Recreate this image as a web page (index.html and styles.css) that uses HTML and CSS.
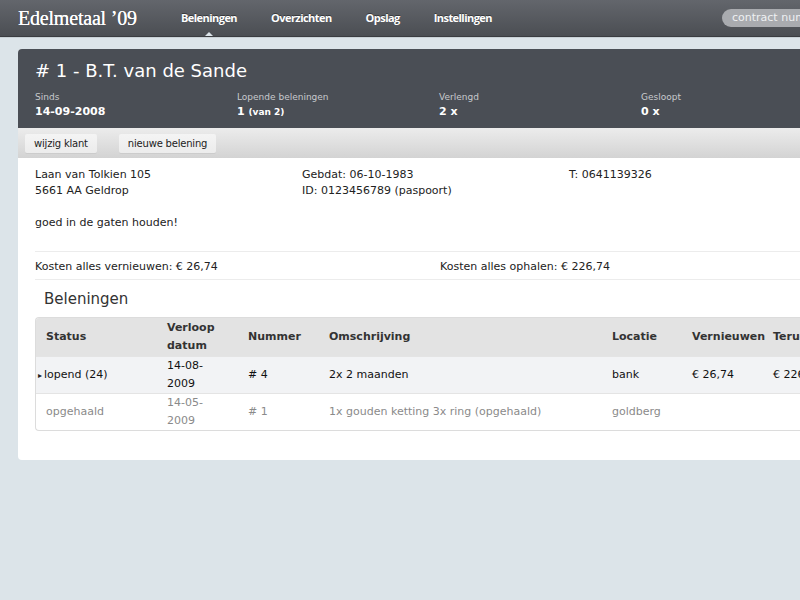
FILE: index.html
```html
<!DOCTYPE html>
<html lang="nl">
<head>
<meta charset="utf-8">
<title>Edelmetaal '09</title>
<link rel="stylesheet" href="styles.css">
</head>
<body>
<header class="topbar">
  <div class="logo">Edelmetaal ’09</div>
  <nav class="mainnav">
    <a class="navitem active">Beleningen</a>
    <a class="navitem">Overzichten</a>
    <a class="navitem">Opslag</a>
    <a class="navitem">Instellingen</a>
  </nav>
  <div class="search"><span>contract nummer</span></div>
</header>

<main class="page">
  <section class="card">
    <div class="card-head">
      <h1 class="title"># 1 - B.T. van de Sande</h1>
      <div class="stats">
        <div class="stat"><div class="stat-label">Sinds</div><div class="stat-value">14-09-2008</div></div>
        <div class="stat"><div class="stat-label">Lopende beleningen</div><div class="stat-value">1 <small>(van 2)</small></div></div>
        <div class="stat"><div class="stat-label">Verlengd</div><div class="stat-value">2 x</div></div>
        <div class="stat"><div class="stat-label">Gesloopt</div><div class="stat-value">0 x</div></div>
      </div>
    </div>
    <div class="toolbar">
      <button class="btn">wijzig klant</button>
      <button class="btn">nieuwe belening</button>
    </div>
    <div class="card-body">
      <div class="info">
        <div>Laan van Tolkien 105<br>5661 AA Geldrop</div>
        <div>Gebdat: 06-10-1983<br>ID: 0123456789 (paspoort)</div>
        <div>T: 0641139326</div>
      </div>
      <p class="note">goed in de gaten houden!</p>
      <div class="costs">
        <div>Kosten alles vernieuwen: € 26,74</div>
        <div>Kosten alles ophalen: € 226,74</div>
      </div>
      <h2 class="section-title">Beleningen</h2>
      <div class="table-wrap">
        <table class="grid">
          <colgroup>
            <col class="c-status"><col class="c-date"><col class="c-num"><col class="c-desc"><col class="c-loc"><col class="c-ren"><col class="c-ret">
          </colgroup>
          <thead>
            <tr><th>Status</th><th class="wrapcell">Verloop datum</th><th>Nummer</th><th>Omschrijving</th><th>Locatie</th><th>Vernieuwen</th><th>Terugbetalen</th></tr>
          </thead>
          <tbody>
            <tr class="row-active"><td><span class="arrow">▸</span>lopend (24)</td><td class="wrapcell">14-08-2009</td><td># 4</td><td>2x 2 maanden</td><td>bank</td><td>€ 26,74</td><td>€ 226,74</td></tr>
            <tr class="row-done"><td>opgehaald</td><td class="wrapcell">14-05-2009</td><td># 1</td><td>1x gouden ketting 3x ring (opgehaald)</td><td>goldberg</td><td></td><td></td></tr>
          </tbody>
        </table>
      </div>
    </div>
  </section>
</main>
</body>
</html>
```

FILE: styles.css
```css
html, body {
  margin: 0;
  padding: 0;
}
body {
  background: #dce4e9;
  font-family: "DejaVu Sans", "Liberation Sans", sans-serif;
  font-size: 11px;
  color: #222;
  overflow: hidden;
  width: 800px;
  height: 600px;
}

.topbar {
  height: 36px;
  background: linear-gradient(#63666c, #4b4e53);
  border-bottom: 1px solid #3a3c40;
  display: flex;
  align-items: center;
  white-space: nowrap;
  box-shadow: 0 1px 0 #c9d1d6;
}
.logo {
  font-family: "Liberation Serif", "DejaVu Serif", serif;
  font-size: 20px;
  color: #fff;
  margin-left: 18px;
  width: 163px;
  letter-spacing: -0.2px;
  text-shadow: 0 0 0.4px #fff;
}
.mainnav {
  display: flex;
  gap: 34px;
  height: 36px;
  align-items: center;
}
.navitem {
  position: relative;
  color: #fff;
  font-family: "Open Sans", "DejaVu Sans", sans-serif;
  font-weight: bold;
  font-size: 11px;
  letter-spacing: -0.55px;
  height: 36px;
  line-height: 36px;
  text-shadow: 0 -1px 0 rgba(0,0,0,0.4);
}
.navitem.active::after {
  content: "";
  position: absolute;
  left: 50%;
  bottom: 0;
  margin-left: -4px;
  border-left: 4px solid transparent;
  border-right: 4px solid transparent;
  border-bottom: 4px solid #dce4e9;
}
.search {
  margin-left: auto;
  margin-right: -40px;
  width: 108px;
  height: 18px;
  border-radius: 9px;
  background: #a9abaf;
  color: #eef0f2;
  font-size: 11px;
  line-height: 18px;
  padding-left: 10px;
  overflow: hidden;
}

.page {
  padding: 12px 0 0 18px;
}
.card {
  width: 860px;
  background: #fff;
  border-radius: 4px 0 0 4px;
  overflow: hidden;
}
.card-head {
  background: #4a4e55;
  color: #fff;
  padding: 10px 17px 8px;
}
.title {
  margin: 0;
  font-size: 18px;
  font-weight: normal;
  line-height: 24px;
}
.stats {
  display: grid;
  grid-template-columns: repeat(4, 202px);
  margin-top: 8px;
}
.stat-label {
  font-size: 9px;
  color: #c8cacd;
  line-height: 13px;
}
.stat-value {
  font-weight: bold;
  font-size: 11px;
  line-height: 16px;
}
.stat-value small {
  font-size: 9px;
}

.toolbar {
  height: 30px;
  background: linear-gradient(#ececec, #d3d3d3);
  display: flex;
  align-items: center;
  gap: 22px;
  padding-left: 7px;
}
.btn {
  font-family: inherit;
  font-size: 10px;
  letter-spacing: -0.2px;
  color: #222;
  background: linear-gradient(#f4f4f4, #ececec);
  border: none;
  border-radius: 2px;
  height: 19px;
  padding: 0 9px;
  box-shadow: 0 1px 0 rgba(0,0,0,0.05);
}

.card-body {
  padding: 9px 17px 29px;
  line-height: 16px;
}
.info {
  display: grid;
  grid-template-columns: repeat(3, 267px);
}
.note {
  margin: 16px 0 0;
  padding-bottom: 20px;
  border-bottom: 1px solid #ececec;
}
.costs {
  display: grid;
  grid-template-columns: 405px 405px;
  padding: 7px 0 4px;
  border-bottom: 1px solid #ececec;
}
.section-title {
  margin: 8px 0 0 9px;
  font-size: 15px;
  font-weight: normal;
  color: #333;
  line-height: 22px;
}
.table-wrap {
  margin-top: 7px;
  border: 1px solid #dcdcdc;
  border-right: none;
  border-radius: 4px 0 0 4px;
  overflow: hidden;
}
.grid {
  border-collapse: collapse;
  width: 810px;
  table-layout: fixed;
}
.c-status { width: 121px; }
.c-date { width: 81px; }
.c-num { width: 81px; }
.c-desc { width: 283px; }
.c-loc { width: 80px; }
.c-ren { width: 81px; }
.c-ret { width: 83px; }
.grid th, .grid td {
  text-align: left;
  padding: 0 0 0 10px;
  line-height: 18px;
  vertical-align: middle;
  white-space: nowrap;
}
.grid .wrapcell {
  white-space: normal;
  padding-right: 18px;
}
.grid th {
  background: #e3e3e3;
  font-weight: bold;
  color: #333;
  height: 38px;
}
.grid td {
  height: 36px;
  border-top: 1px solid #e4e4e4;
}
.grid tbody tr:last-child td {
  height: 35px;
}
.row-active td {
  background: #f2f3f5;
  color: #111;
}
.row-done td {
  color: #8a8a8a;
}
.arrow {
  font-size: 8px;
  margin-left: -8px;
  margin-right: 2px;
  color: #222;
}
```
